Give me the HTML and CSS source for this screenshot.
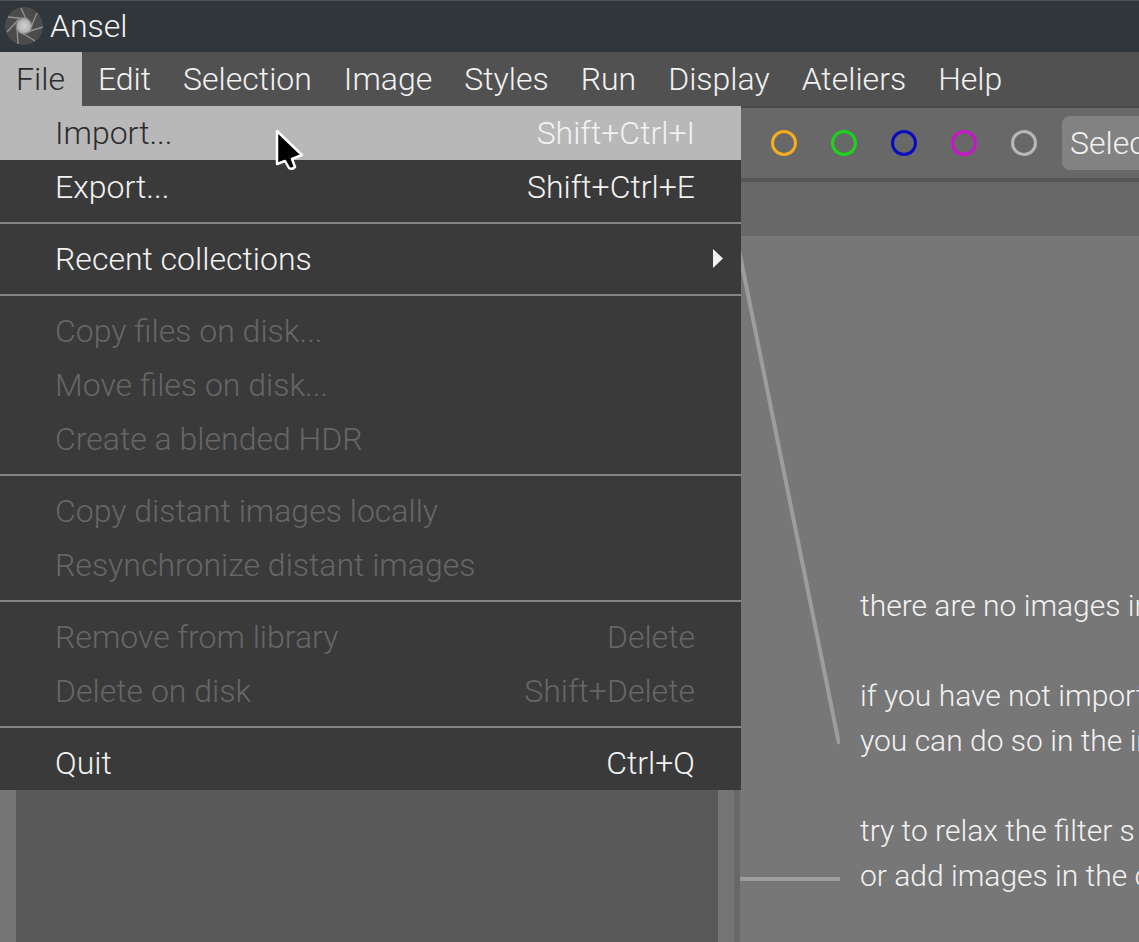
FILE: index.html
```html
<!DOCTYPE html>
<html lang="en">
<head>
<meta charset="utf-8">
<meta name="viewport" content="width=device-width, initial-scale=1">
<title>Ansel</title>
<link rel="stylesheet" href="styles.css">
</head>
<body>
<div class="app">
  <header class="titlebar">
    <svg class="logo" viewBox="0 0 38 38" aria-hidden="true">
      <defs>
        <radialGradient id="glow"><stop offset="0" stop-color="#d0d0d0"/><stop offset=".7" stop-color="#b4b4b4"/><stop offset="1" stop-color="#8a8a8a" stop-opacity=".2"/></radialGradient>
      </defs>
      <circle cx="19" cy="19" r="19" fill="#4b4b4b"/>
      <g stroke="#909090" stroke-width="1.4" fill="none">
        <path d="M16 1 21 12M32 6 26 20M38 20 22 25M30 34 14 24M13 37 12 20M2 25 14 12M3 10 23 12"/>
      </g>
      <circle cx="19" cy="19" r="9" fill="url(#glow)"/>
    </svg>
    <span class="app-name">Ansel</span>
  </header>
  <nav class="menubar" aria-label="Main menu">
    <button class="menu-title menu-title-open" type="button" aria-expanded="true">File</button>
    <button class="menu-title" type="button">Edit</button>
    <button class="menu-title" type="button">Selection</button>
    <button class="menu-title" type="button">Image</button>
    <button class="menu-title" type="button">Styles</button>
    <button class="menu-title" type="button">Run</button>
    <button class="menu-title" type="button">Display</button>
    <button class="menu-title" type="button">Ateliers</button>
    <button class="menu-title" type="button">Help</button>
    <div class="dropdown" role="menu" aria-label="File">
      <button class="item item-active" role="menuitem" type="button"><span>Import...</span><kbd>Shift+Ctrl+I</kbd></button>
      <button class="item" role="menuitem" type="button"><span>Export...</span><kbd>Shift+Ctrl+E</kbd></button>
      <hr class="rule">
      <button class="item item-sub" role="menuitem" type="button"><span>Recent collections</span><svg class="arrow" viewBox="0 0 10 20" aria-hidden="true"><path d="M0 0V19L10 9.500Z" fill="#f2f2f2"/></svg></button>
      <hr class="rule">
      <button class="item" role="menuitem" type="button" disabled><span>Copy files on disk...</span></button>
      <button class="item" role="menuitem" type="button" disabled><span>Move files on disk...</span></button>
      <button class="item" role="menuitem" type="button" disabled><span>Create a blended HDR</span></button>
      <hr class="rule">
      <button class="item" role="menuitem" type="button" disabled><span>Copy distant images locally</span></button>
      <button class="item" role="menuitem" type="button" disabled><span>Resynchronize distant images</span></button>
      <hr class="rule">
      <button class="item" role="menuitem" type="button" disabled><span>Remove from library</span><kbd>Delete</kbd></button>
      <button class="item" role="menuitem" type="button" disabled><span>Delete on disk</span><kbd>Shift+Delete</kbd></button>
      <hr class="rule">
      <button class="item" role="menuitem" type="button"><span>Quit</span><kbd>Ctrl+Q</kbd></button>
    </div>
  </nav>
  <div class="toolbar">
    <button class="label label-yellow" type="button" aria-label="Yellow label"></button>
    <button class="label label-green" type="button" aria-label="Green label"></button>
    <button class="label label-blue" type="button" aria-label="Blue label"></button>
    <button class="label label-purple" type="button" aria-label="Purple label"></button>
    <button class="label label-gray" type="button" aria-label="Gray label"></button>
    <button class="select" type="button">Select</button>
  </div>
  <div class="workspace">
    <aside class="side"><div class="side-panel"></div></aside>
    <main class="center">
      <div class="filter-band"></div>
      <div class="empty">
        <svg class="pointers" viewBox="0 0 100 706" aria-hidden="true">
          <path d="M-1 14 99 508M0 643H100" fill="none" stroke="#9d9d9d" stroke-width="4"/>
        </svg>
        <div class="message">
          <p>there are no images in</p>
          <p>if you have not import<br>you can do so in the in</p>
          <p>try to relax the filter s<br>or add images in the c</p>
        </div>
      </div>
    </main>
  </div>
  <svg class="cursor" viewBox="0 0 32 44" aria-hidden="true">
    <path d="M3 3V36L11 33 15 40Q18 42 21 39L18 31 28 27Z" fill="#000" stroke="#fff" stroke-width="2.500" stroke-linejoin="round"/>
  </svg>
</div>
</body>
</html>
```
FILE: styles.css
```css
* { box-sizing: border-box; }
body {
  margin: 0;
  background: #777;
  color: #f2f2f2;
  font: 300 32px/54px Roboto, "Liberation Sans", sans-serif;
}
button {
  margin: 0;
  border: 0;
  background: none;
  color: inherit;
  font: inherit;
}
.app {
  position: relative;
  display: flex;
  flex-direction: column;
  height: 100vh;
  overflow: hidden;
}
.titlebar {
  display: flex;
  flex: none;
  align-items: center;
  gap: 7px;
  height: 52px;
  padding: 0 5px 2px;
  border-top: 1px solid #4d555b;
  background: #30363a;
}
.logo { width: 38px; height: 38px; }
.app-name { line-height: 46px; }
.menubar {
  position: relative;
  z-index: 2;
  display: flex;
  flex: none;
  height: 56px;
  border-bottom: 2px solid #4a4a4a;
  background: #515151;
}
.menu-title {
  height: 54px;
  padding: 0 16px;
  white-space: nowrap;
}
.menu-title-open { padding-right: 17px; background: #b8b8b8; color: #2c2c2c; }
.dropdown {
  position: absolute;
  top: 54px;
  left: 0;
  width: 741px;
  background: #3a3a3a;
}
.item {
  display: flex;
  align-items: center;
  justify-content: space-between;
  width: 100%;
  height: 54px;
  padding: 0 46px 0 55px;
  text-align: left;
  white-space: nowrap;
}
.item kbd { font: inherit; }
.item:disabled { color: #666; }
.item-active { background: #b8b8b8; color: #2c2c2c; }
.item-active kbd { color: #f2f2f2; }
.item-sub { padding-right: 18px; }
.arrow { width: 10px; height: 20px; }
.rule {
  height: 2px;
  margin: 8px 0;
  border: 0;
  background: #858585;
}
.toolbar {
  display: flex;
  flex: none;
  align-items: center;
  gap: 34px;
  height: 74px;
  padding-left: 771px;
  border-bottom: 4px solid #555;
  background: #686868;
}
.label {
  flex: none;
  width: 26px;
  height: 26px;
  padding: 0;
  border: 3px solid;
  border-radius: 50%;
}
.label-yellow { border-color: #f5ae1c; }
.label-green { border-color: #1ad61a; }
.label-blue { border-color: #0a0ac4; }
.label-purple { border-color: #cc14cc; }
.label-gray { border-color: #b8b8b8; }
.select {
  flex: none;
  height: 54px;
  margin-left: -9px;
  padding: 0 8px;
  border-radius: 8px;
  background: #828282;
}
.workspace {
  display: flex;
  flex: 1;
  min-height: 0;
}
.side {
  display: flex;
  flex: none;
  width: 740px;
  padding: 0 16px;
  border-right: 6px solid #686868;
  background: #747474;
}
.side-panel { flex: 1; background: #595959; }
.center {
  display: flex;
  flex: 1;
  flex-direction: column;
  min-width: 0;
}
.filter-band { flex: none; height: 54px; background: #686868; }
.empty {
  display: flex;
  flex: 1;
  gap: 20px;
  min-height: 0;
  overflow: hidden;
  background: #777;
}
.pointers { flex: none; width: 100px; height: 706px; }
.message {
  padding-top: 347px;
  font-size: 30px;
  line-height: 45px;
  white-space: nowrap;
}
.message p { margin: 0 0 45px; }
.cursor {
  position: absolute;
  z-index: 3;
  top: 128px;
  left: 274px;
  width: 32px;
  height: 44px;
}
```
